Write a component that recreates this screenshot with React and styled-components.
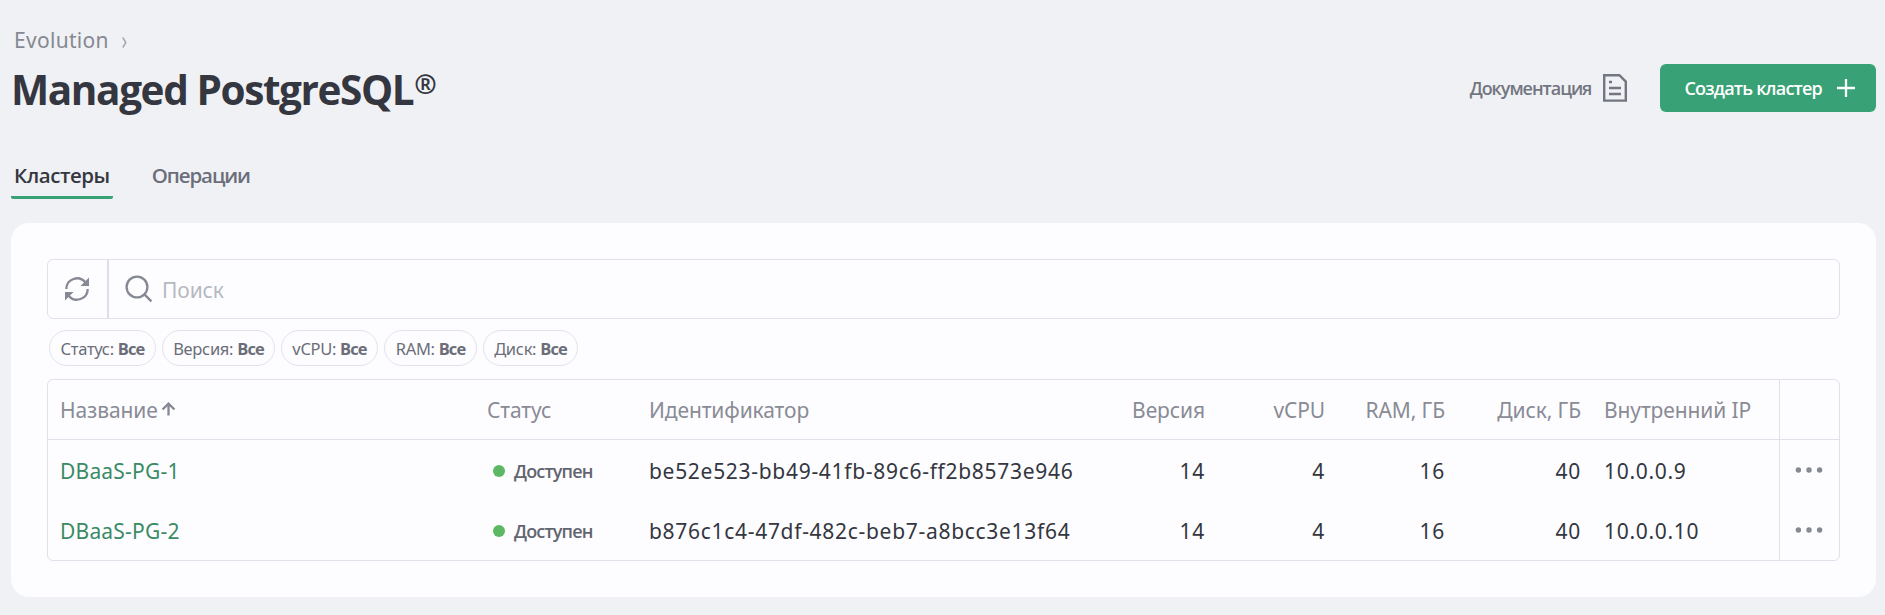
import React from "react";
import styled, { createGlobalStyle } from "styled-components";

const GlobalStyle = createGlobalStyle`
  * {
    box-sizing: border-box;
  }
  body {
    margin: 0;
    background-color: #f0f1f5;
    color: #343640;
    font-family: "Noto Sans", "Open Sans", sans-serif;
    font-size: 21px;
  }
`;

const Page = styled.div`
  height: 615px;
  padding: 24px 9px 18px 11px;
  display: flex;
  flex-direction: column;
`;

const Breadcrumbs = styled.nav`
  height: 32px;
  padding-left: 3px;
  display: flex;
  align-items: center;
  gap: 13px;
  line-height: 32px;
  letter-spacing: 0.3px;
  color: #868992;
`;

const Chevron = styled.svg`
  margin-top: 4px;
`;

const Header = styled.header`
  height: 64px;
  display: flex;
  align-items: center;
  justify-content: space-between;
`;

const Title = styled.h1`
  margin: 0;
  padding-top: 3px;
  display: flex;
  font-family: "Open Sans", sans-serif;
  font-size: 40.5px;
  font-weight: 700;
  line-height: 60px;
  letter-spacing: -1.4px;
`;

const Registered = styled.span`
  margin-left: 1px;
  font-size: 27px;
  line-height: 48px;
`;

const Actions = styled.div`
  display: flex;
  align-items: center;
  gap: 33px;
`;

const Button = styled.button`
  height: 48px;
  border: 0;
  border-radius: 6px;
  padding: ${({ $primary }) => ($primary ? "0 21px 0 24px" : "0")};
  display: flex;
  align-items: center;
  gap: ${({ $primary }) => ($primary ? "15px" : "12px")};
  background-color: ${({ $primary }) => ($primary ? "#38a176" : "transparent")};
  color: ${({ $primary }) => ($primary ? "#fff" : "#737681")};
  font-family: "Open Sans", sans-serif;
  font-size: 18px;
  font-weight: 600;
  letter-spacing: ${({ $primary }) => ($primary ? "-0.79px" : "-1.03px")};
  cursor: pointer;
`;

const Tabs = styled.div`
  margin-top: 40px;
  height: 39px;
  display: flex;
  gap: 36px;
`;

const Tab = styled.div`
  padding: 0 3px;
  border-bottom: 3px solid ${({ $active }) => ($active ? "#38a176" : "transparent")};
  border-radius: 2px;
  font-family: "Open Sans", sans-serif;
  font-size: 20.5px;
  font-weight: 600;
  line-height: 31px;
  letter-spacing: ${({ $active }) => ($active ? "-0.45px" : "-1.1px")};
  color: ${({ $active }) => ($active ? "#343640" : "#6b6e7a")};
`;

const Panel = styled.main`
  margin-top: 24px;
  height: 374px;
  padding: 36px;
  border-radius: 18px;
  background-color: #fdfdff;
`;

const SearchBar = styled.div`
  height: 60px;
  display: flex;
  border: 1px solid #e0e1ea;
  border-radius: 6px;
`;

const Refresh = styled.div`
  width: 61px;
  padding-left: 17px;
  display: flex;
  align-items: center;
  border-right: 2px solid #dcdfe9;
`;

const SearchField = styled.label`
  flex: 1;
  padding-left: 16px;
  display: flex;
  align-items: center;
  gap: 9px;
`;

const SearchInput = styled.input`
  flex: 1;
  border: 0;
  padding: 1px 0 0;
  outline: 0;
  background: none;
  font: inherit;
  letter-spacing: -0.1px;
  &::placeholder {
    color: #b7b9c1;
  }
`;

const Filters = styled.div`
  margin: 11px 2px 13px;
  display: flex;
  gap: 6px;
`;

const Chip = styled.div`
  width: ${({ $width }) => $width}px;
  height: 36px;
  padding-top: 2px;
  border: 1px solid #e2e2ee;
  border-radius: 18px;
  display: flex;
  align-items: center;
  justify-content: center;
  gap: 4px;
  font-size: 16.5px;
  line-height: 32px;
  letter-spacing: -0.3px;
  color: #6b6d78;
`;

const ChipValue = styled.b`
  font-family: "Open Sans", sans-serif;
  font-weight: 700;
  letter-spacing: -0.9px;
`;

const Table = styled.div`
  border: 1px solid #e0e1ea;
  border-radius: 6px;
`;

const Row = styled.div`
  height: 60px;
  display: grid;
  grid-template-columns: 427px 162px 459px 120px 120px 120px 136px 187px 1fr;
  border-bottom: ${({ $head }) => ($head ? "1px solid #e0e1ea" : "0")};
  color: ${({ $head }) => ($head ? "#898b95" : "#343640")};
  letter-spacing: ${({ $head }) => ($head ? "-0.1px" : "0.7px")};
`;

const Cell = styled.div`
  padding: 1px ${({ $right }) => ($right ? "11px" : "12px")} 0 12px;
  display: flex;
  align-items: center;
  justify-content: ${({ $right }) => ($right ? "flex-end" : "flex-start")};
  white-space: nowrap;
`;

const ActionCell = styled(Cell)`
  padding: 0 2px 0 0;
  justify-content: center;
  border-left: 1px solid #e0e1ea;
`;

const SortIcon = styled.svg`
  margin: -2px 0 0 3px;
`;

const Link = styled.a`
  color: #3a8a64;
  letter-spacing: 0.2px;
`;

const Status = styled.span`
  padding-left: 6px;
  display: flex;
  align-items: center;
  gap: 9px;
  font-family: "Open Sans", sans-serif;
  font-size: 18px;
  font-weight: 600;
  letter-spacing: -0.85px;
  color: #62656f;
`;

const Dot = styled.i`
  width: 12px;
  height: 12px;
  border-radius: 50%;
  background-color: #5cb863;
`;

const filters = [
  { name: "Статус", width: 107 },
  { name: "Версия", width: 113 },
  { name: "vCPU", width: 97 },
  { name: "RAM", width: 93 },
  { name: "Диск", width: 95 },
];

const clusters = [
  {
    name: "DBaaS-PG-1",
    id: "be52e523-bb49-41fb-89c6-ff2b8573e946",
    ip: "10.0.0.9",
  },
  {
    name: "DBaaS-PG-2",
    id: "b876c1c4-47df-482c-beb7-a8bcc3e13f64",
    ip: "10.0.0.10",
  },
];

const DocumentIcon = () => (
  <svg width="24" height="28" viewBox="0 0 24 28" fill="none" stroke="currentColor" strokeWidth="2.4">
    <path d="M1.2 1.2H16.4L22.8 7.6V26.6H1.2Z" />
    <path d="M6 8h3M6 14h12M6 20h12" />
  </svg>
);

const PlusIcon = () => (
  <svg width="18" height="18" viewBox="0 0 18 18" stroke="currentColor" strokeWidth="2.3">
    <path d="M9 0v18M0 9h18" />
  </svg>
);

const RefreshIcon = () => (
  <svg width="24" height="24" viewBox="0 0 24 24" fill="none">
    <path
      d="M1.3 12A10.7 10.7 0 0 1 20.3 5.3M22.7 12A10.7 10.7 0 0 1 3.7 18.7"
      stroke="#868993"
      strokeWidth="2.3"
    />
    <path d="M24 .6V9H15.5ZM0 23.4V15H8.5Z" fill="#868993" />
  </svg>
);

const SearchIcon = () => (
  <svg width="28" height="28" viewBox="0 0 28 28" fill="none" stroke="#868993" strokeWidth="2.3">
    <circle cx="12" cy="12" r="10.4" />
    <path d="M19.4 19.4L26.4 26.4" />
  </svg>
);

const MoreIcon = () => (
  <svg width="28" height="6" viewBox="0 0 28 6" fill="#868993">
    <circle cx="3.4" cy="3" r="2.7" />
    <circle cx="14" cy="3" r="2.7" />
    <circle cx="24.6" cy="3" r="2.7" />
  </svg>
);

const App = () => (
  <Page>
    <GlobalStyle />
    <Breadcrumbs>
      <span>Evolution</span>
      <Chevron width="5" height="11" viewBox="0 0 5 11" fill="none" stroke="#a6a8b0" strokeWidth="1.5">
        <path d="M.8 .5L3.8 5.5L.8 10.5" />
      </Chevron>
    </Breadcrumbs>
    <Header>
      <Title>
        Managed PostgreSQL<Registered>®</Registered>
      </Title>
      <Actions>
        <Button>
          Документация <DocumentIcon />
        </Button>
        <Button $primary>
          Создать кластер <PlusIcon />
        </Button>
      </Actions>
    </Header>
    <Tabs>
      <Tab $active>Кластеры</Tab>
      <Tab>Операции</Tab>
    </Tabs>
    <Panel>
      <SearchBar>
        <Refresh>
          <RefreshIcon />
        </Refresh>
        <SearchField>
          <SearchIcon />
          <SearchInput placeholder="Поиск" />
        </SearchField>
      </SearchBar>
      <Filters>
        {filters.map(({ name, width }) => (
          <Chip key={name} $width={width}>
            {name}: <ChipValue>Все</ChipValue>
          </Chip>
        ))}
      </Filters>
      <Table>
        <Row $head>
          <Cell>
            Название
            <SortIcon width="15" height="14" viewBox="0 0 15 14" fill="none" stroke="#868993" strokeWidth="2.3">
              <path d="M7.5 13.5V2M1.5 7.5L7.5 1.7L13.5 7.5" />
            </SortIcon>
          </Cell>
          <Cell>Статус</Cell>
          <Cell>Идентификатор</Cell>
          <Cell $right>Версия</Cell>
          <Cell $right>vCPU</Cell>
          <Cell $right>RAM, ГБ</Cell>
          <Cell $right>Диск, ГБ</Cell>
          <Cell>Внутренний IP</Cell>
          <ActionCell />
        </Row>
        {clusters.map(({ name, id, ip }) => (
          <Row key={id}>
            <Cell>
              <Link>{name}</Link>
            </Cell>
            <Cell>
              <Status>
                <Dot />
                Доступен
              </Status>
            </Cell>
            <Cell>{id}</Cell>
            <Cell $right>14</Cell>
            <Cell $right>4</Cell>
            <Cell $right>16</Cell>
            <Cell $right>40</Cell>
            <Cell>{ip}</Cell>
            <ActionCell>
              <MoreIcon />
            </ActionCell>
          </Row>
        ))}
      </Table>
    </Panel>
  </Page>
);

export default App;
